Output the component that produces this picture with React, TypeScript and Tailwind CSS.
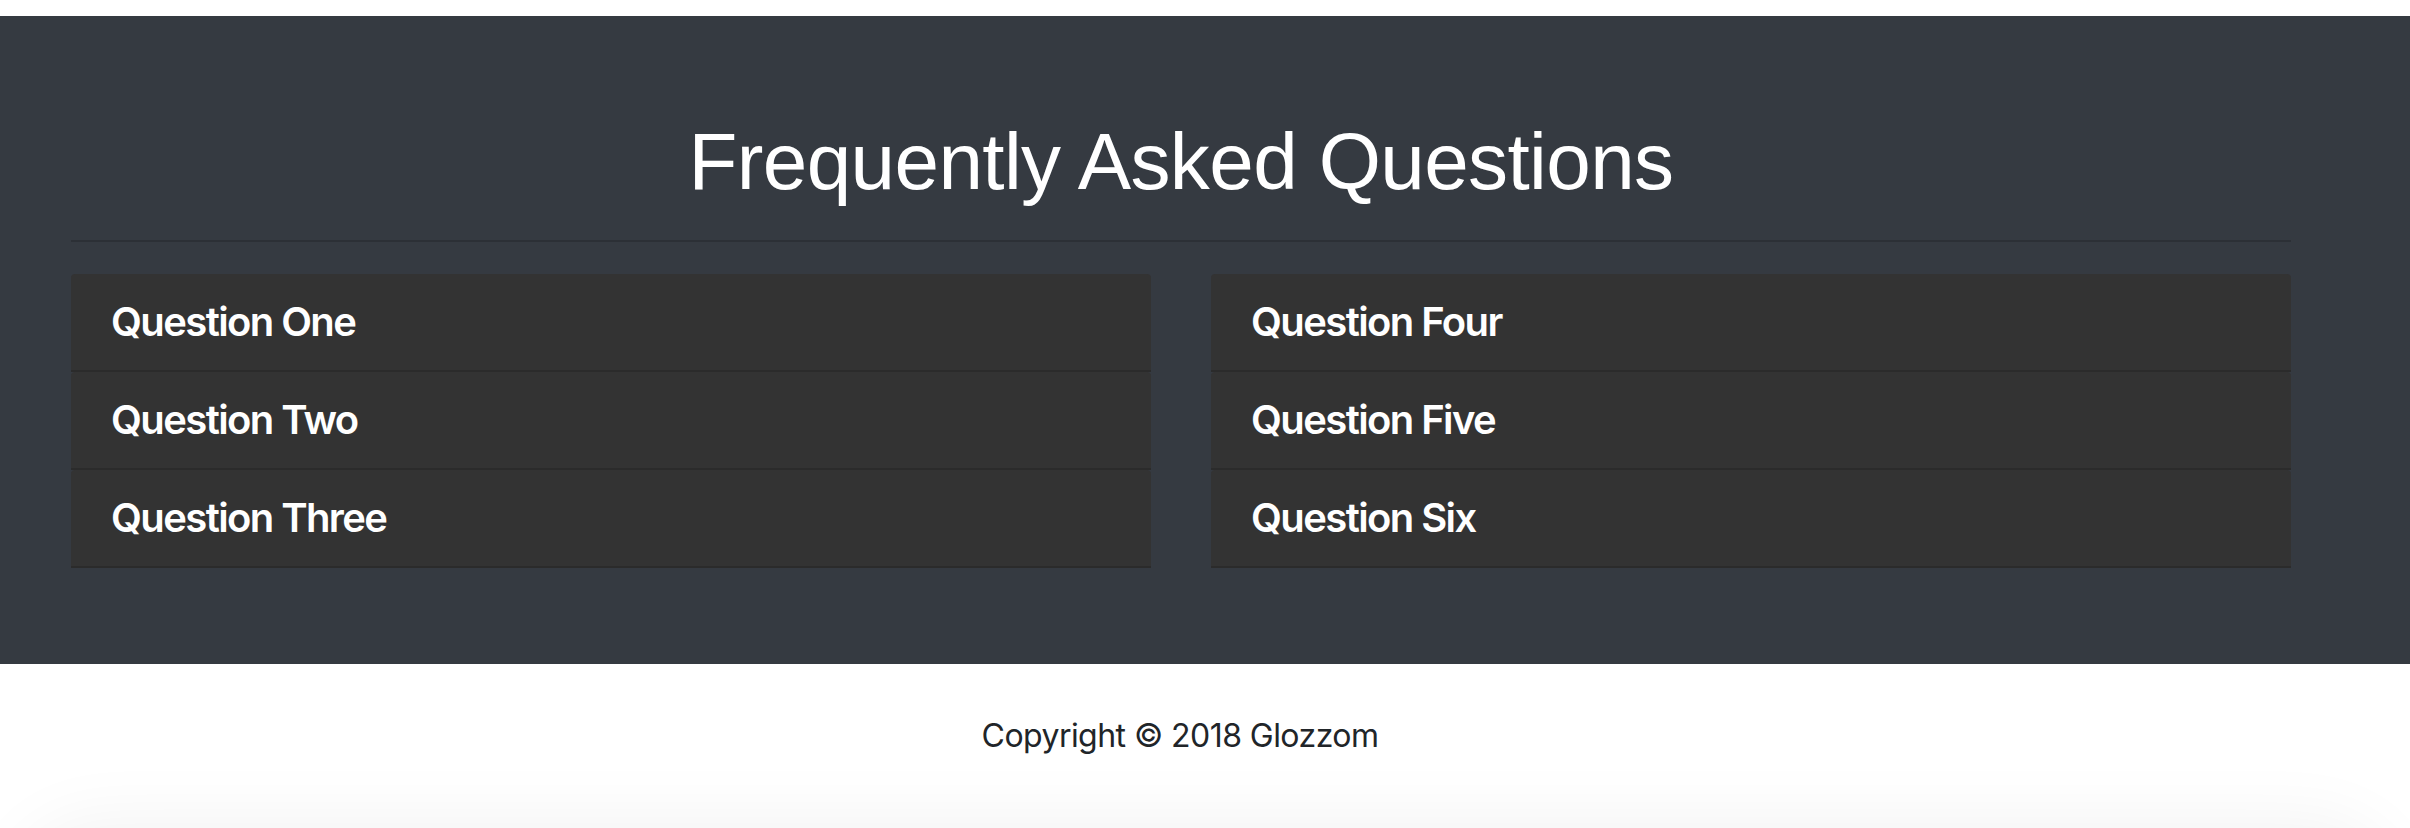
import React from "react";

const left = ["Question One", "Question Two", "Question Three"];
const right = ["Question Four", "Question Five", "Question Six"];

function Column({ items }: { items: string[] }) {
  return (
    <div className="flex flex-col">
      {items.map((q) => (
        <div
          key={q}
          className="bg-[#333333] rounded-t-[4px] border-b-2 border-[#2b2b2b] px-[40px] py-[24px]"
        >
          <h5 className="font-['Inter',sans-serif] font-semibold text-white text-[40px] leading-[48px] tracking-[-1.6px]">
            {q}
          </h5>
        </div>
      ))}
    </div>
  );
}

export default function App() {
  return (
    <div className="w-[2410px] h-[828px] bg-white pt-4 overflow-hidden">
      <section className="bg-[#353a41] pt-[98px] pb-[96px]">
        <div className="ml-[71px] w-[2220px]">
          <h1 className="text-center text-white font-['Liberation_Sans',Arial,sans-serif] text-[80px] leading-[96px] tracking-[-0.6px]">
            Frequently Asked Questions
          </h1>
          <hr className="mt-[30px] mb-[32px] border-0 border-t-2 border-[#2c3036]" />
          <div className="grid grid-cols-2 gap-x-[60px]">
            <Column items={left} />
            <Column items={right} />
          </div>
        </div>
      </section>
      <footer className="relative h-[164px] overflow-hidden bg-white">
        <div className="pt-[48px] w-[2360px] text-center font-['Inter',sans-serif] text-[32px] leading-[48px] tracking-[-0.55px] text-[#212529]">
          Copyright © 2018 Glozzom
        </div>
        <div className="absolute left-[40px] right-[40px] top-[186px] h-[200px] rounded-[60px] bg-[#f2f2f2] shadow-[0_0_70px_30px_rgba(0,0,0,0.05)]" />
      </footer>
    </div>
  );
}
